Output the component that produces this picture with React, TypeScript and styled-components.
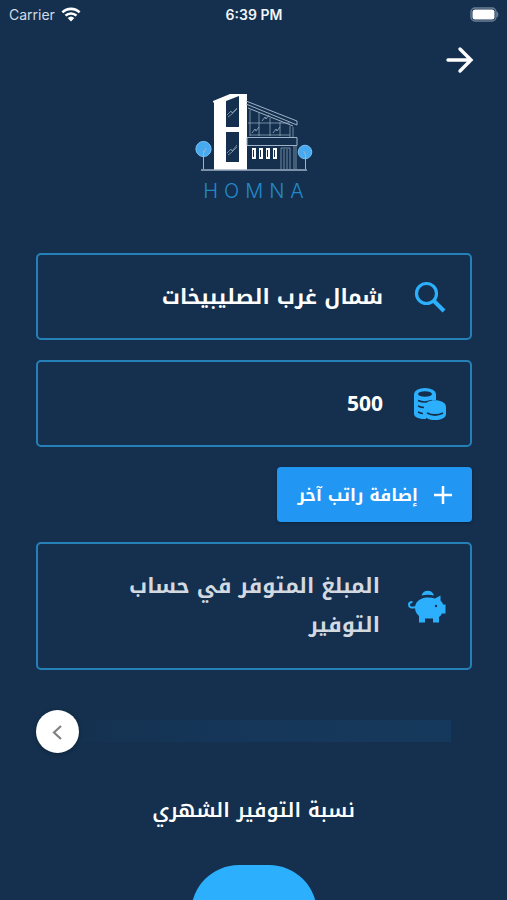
import React from 'react';
import styled, { createGlobalStyle } from 'styled-components';

const Global = createGlobalStyle`
  * { box-sizing: border-box; }
  body { margin: 0; background: #14304e; }
  body, input, textarea, button { font-family: "Noto Kufi Arabic", "Noto Sans", sans-serif; }
`;

const Page = styled.div`
  height: 100vh;
  overflow: hidden;
  display: flex;
  flex-direction: column;
  background: #14304e;
  color: #fff;
  & > * { flex: none; }
`;

const StatusBar = styled.header`
  display: grid;
  grid-template-columns: 1fr auto 1fr;
  align-items: center;
  height: 28px;
  padding: 0 8px 0 9px;
  font-family: Inter, sans-serif;
  font-size: 14px;
`;

const Carrier = styled.div`
  display: flex;
  align-items: center;
  gap: 6px;
  color: #d3dbe4;
`;

const Clock = styled.time`
  font-weight: 600;
  color: #f0f4f8;
`;

const BatteryIcon = styled.svg`
  justify-self: end;
`;

const NavBar = styled.nav`
  display: flex;
  justify-content: flex-end;
  padding: 16px 32px 0;
`;

const NavButton = styled.button`
  display: flex;
  padding: 0;
  border: 0;
  background: none;
  color: #fff;
`;

const Brand = styled.div`
  display: flex;
  flex-direction: column;
  align-items: center;
  margin-top: 16px;
`;

const BrandName = styled.h1`
  margin: 5px 0 0;
  padding-left: 6px;
  font: 300 20px/28px Inter, sans-serif;
  letter-spacing: 6px;
  color: #2488c8;
`;

const Form = styled.form`
  display: flex;
  flex-direction: column;
  gap: 20px;
  margin-top: 48px;
  padding: 0 35px 0 36px;
`;

const Field = styled.label<{ $tall?: boolean }>`
  display: flex;
  align-items: center;
  gap: 28px;
  min-height: ${p => (p.$tall ? 128 : 87)}px;
  padding: 0 ${p => (p.$tall ? 24 : 21)}px;
  border: 2px solid #2680b8;
  border-radius: 5px;
`;

const FieldIcon = styled.span`
  display: flex;
  flex: none;
  justify-content: center;
  width: 38px;
  color: #2cb0fd;
`;

const TextInput = styled.input`
  flex: 1;
  min-width: 0;
  height: 48px;
  padding: 0;
  border: 0;
  outline: 0;
  background: none;
  color: #fff;
  font-size: 21px;
  font-weight: 700;
`;

const TextArea = styled.textarea`
  flex: 1;
  min-width: 0;
  height: 78px;
  padding: 0;
  border: 0;
  outline: 0;
  resize: none;
  overflow: hidden;
  background: none;
  color: #fff;
  font-size: 21px;
  font-weight: 700;
  line-height: 39px;
  &::placeholder { color: #d2d9e0; opacity: 1; }
`;

const AddButton = styled.button`
  display: flex;
  align-items: center;
  align-self: flex-start;
  gap: 14px;
  height: 55px;
  padding: 0 18px 0 20px;
  border: 0;
  border-radius: 4px;
  background: #2196f3;
  color: #fff;
  font-size: 17px;
  font-weight: 700;
  box-shadow: 0 1px 3px rgba(0, 0, 0, 0.3);
`;

const chevron =
  "url(\"data:image/svg+xml,%3Csvg xmlns='http://www.w3.org/2000/svg' width='42' height='42' fill='none' stroke='%23808080' stroke-width='2.2'%3E%3Cpath d='M24 15l-7 6.500 7 6.500'/%3E%3C/svg%3E\")";

const Swipe = styled.input`
  appearance: none;
  width: 100%;
  height: 42px;
  margin: 20px 0 0;
  background: none;
  &::-webkit-slider-runnable-track {
    height: 42px;
    background: linear-gradient(to right, #14304e, #153659 40%, #15395c) center / calc(100% - 42px) 22px no-repeat;
  }
  &::-webkit-slider-thumb {
    appearance: none;
    width: 43px;
    height: 43px;
    border-radius: 50%;
    background: #fff ${chevron} center no-repeat;
    box-shadow: 0 1px 4px rgba(0, 0, 0, 0.3);
  }
`;

const Savings = styled.section`
  display: flex;
  flex-direction: column;
  align-items: center;
  margin-top: 38px;
`;

const SavingsTitle = styled.h2`
  margin: 0;
  font-size: 20px;
  line-height: 40px;
  font-weight: 600;
`;

const SavingsDial = styled.button`
  flex: none;
  width: 126px;
  height: 126px;
  margin-top: 35px;
  border: 0;
  border-radius: 48px;
  background: #2cb0fd;
`;

const WifiIcon = () => (
  <svg width="20" height="15" viewBox="0 0 20 15" fill="none" stroke="#fff" strokeWidth="2.6">
    <path d="M1.4 5.4a12.3 12.3 0 0 1 17.2 0M4.5 8.7a7.8 7.8 0 0 1 11 0" />
    <path d="M10 14.4l-3.3-3.3a4.8 4.8 0 0 1 6.6 0z" fill="#fff" stroke="none" />
  </svg>
);

const Battery = () => (
  <BatteryIcon width="29" height="15" viewBox="0 0 29 15">
    <rect x="1" y="1" width="25" height="13" rx="4" fill="none" stroke="#6b7f96" strokeWidth="1.4" />
    <rect x="2.500" y="2.500" width="22" height="10" rx="2.500" fill="#fff" />
    <path d="M27 5q2 2.500 0 5z" fill="#6b7f96" stroke="#6b7f96" />
  </BatteryIcon>
);

const House = () => (
  <svg width="120" height="80" viewBox="0 0 120 80" fill="none" stroke="#9fb2c6" strokeWidth="1">
    <path d="M19 9L36 2h17v76H20V10l-1 1z" fill="#fff" stroke="none" />
    <path d="M32 9l13-5v31H32zM32 40h13v30H32z" fill="#14304e" stroke="none" />
    <path d="M33 23l4-4 1 2 5-5M34 25l4-3 5-5M33 61l4-4 1 2 5-6M34 63l4-3 5-5" strokeWidth=".7" />
    <path d="M52 9l51 20v4L52 12M54 16l45 18" />
    <path d="M56 18v26M65 21v23M76 26v18M86 30v14M96 34v11M99 35v11M54 31h42M56 43h40" strokeWidth=".7" />
    <path d="M58 41l3-4 1 2 3-4M68 29l3-4 1 2 3-4M79 41l3-4 1 2 3-4" strokeWidth=".8" />
    <path d="M53 45.500h50v8H53z" />
    <path d="M100 53v24M102 53v24M87 77V56h9v21M90 57v20M93 57v20" strokeWidth=".7" />
    <path d="M58 56h4v11h-4zM65 56h4v11h-4zM72 56h4v11h-4zM79 56h4v11h-4z" fill="#fff" stroke="none" />
    <path d="M59 58h1v7h-1zM66 58h1v7h-1zM73 58h1v7h-1zM80 58h1v7h-1z" fill="#14304e" stroke="none" />
    <path d="M7 78h106" strokeWidth="1.300" />
    <circle cx="9.500" cy="57" r="7.600" fill="#47aaf0" stroke="#7cc0f2" />
    <circle cx="111" cy="60" r="6.800" fill="#47aaf0" stroke="#7cc0f2" />
    <path d="M9.500 77V59M9.500 61l2.500-5M111.500 77V62l-2-3" />
  </svg>
);

const Coins = () => (
  <svg width="34" height="34" viewBox="0 0 34 34">
    <path d="M1 7v20c0 3 5 5 11 5h1V14l10-1V7z" fill="currentColor" />
    <ellipse cx="12" cy="7" rx="11" ry="6" fill="currentColor" />
    <ellipse cx="12" cy="7" rx="7" ry="2.800" fill="#14304e" />
    <path d="M5 13.500q7 3 14 0M5 19q3 1.500 6 1.500M5 25q3 1.500 5 1.500" fill="none" stroke="#14304e" strokeWidth="1.500" />
    <path d="M11 20c0-9 22-9 22 0v7c0 8-22 8-22 0z" fill="currentColor" />
    <path d="M14 26q8 4 16 0" fill="none" stroke="#14304e" strokeWidth="1.800" />
  </svg>
);

const Pig = () => (
  <svg width="38" height="34" viewBox="0 0 38 34" fill="currentColor">
    <path d="M13.500 6.500a6.500 6.500 0 0 1 12.500 0q-6-1.500-12.500 0z" />
    <path d="M7 18C8 11 14 8.500 20 8.500q4 0 7 1l5.500-3v5q2 2 2.500 4H37.500v9H34q-1 2-3 3.500V33.500h-6v-4h-8v4h-6v-6.500q-4-3-4-9z" />
    <path d="M8 18Q1 20 1 15.500q0-2.500 3.500-2.500" fill="none" stroke="currentColor" strokeWidth="2" />
    <circle cx="28" cy="17" r="1.200" fill="#14304e" />
  </svg>
);

export default function App() {
  return (
    <Page>
      <Global />
      <StatusBar>
        <Carrier>Carrier <WifiIcon /></Carrier>
        <Clock>6:39 PM</Clock>
        <Battery />
      </StatusBar>
      <NavBar>
        <NavButton aria-label="رجوع">
          <svg width="32" height="32" viewBox="0 0 32 32" fill="none" stroke="currentColor" strokeWidth="3.400" strokeLinecap="round">
            <path d="M5 16h23M17 5L28 16 17 27" />
          </svg>
        </NavButton>
      </NavBar>
      <Brand>
        <House />
        <BrandName>HOMNA</BrandName>
      </Brand>
      <Form dir="rtl">
        <Field>
          <FieldIcon>
            <svg width="32" height="32" viewBox="0 0 32 32" fill="none" stroke="currentColor" strokeWidth="3.200">
              <circle cx="12.500" cy="12.500" r="10" />
              <path d="M19.500 19.500L30 30" strokeWidth="4" />
            </svg>
          </FieldIcon>
          <TextInput aria-label="المنطقة" defaultValue="شمال غرب الصليبيخات" />
        </Field>
        <Field>
          <FieldIcon><Coins /></FieldIcon>
          <TextInput aria-label="الراتب" inputMode="numeric" defaultValue="500" />
        </Field>
        <AddButton type="button">
          <svg width="22" height="22" viewBox="0 0 22 22" stroke="currentColor" strokeWidth="2.500">
            <path d="M11 2v18M2 11h18" />
          </svg>
          إضافة راتب آخر
        </AddButton>
        <Field $tall>
          <FieldIcon><Pig /></FieldIcon>
          <TextArea aria-label="التوفير" rows={2} placeholder="المبلغ المتوفر في حساب التوفير" />
        </Field>
        <Swipe type="range" dir="ltr" aria-label="متابعة" min={0} max={100} defaultValue={0} />
      </Form>
      <Savings dir="rtl">
        <SavingsTitle>نسبة التوفير الشهري</SavingsTitle>
        <SavingsDial aria-label="نسبة التوفير" />
      </Savings>
    </Page>
  );
}
